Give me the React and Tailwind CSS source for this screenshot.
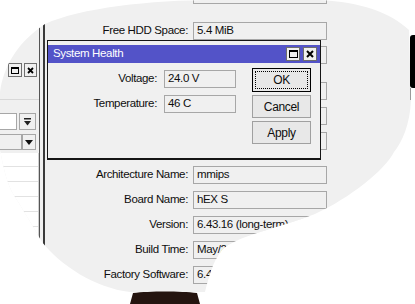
import React from "react";

const field =
  "h-[18px] border border-[#a7a7a7] bg-[#f0f0f0] flex items-center pl-[3px] whitespace-nowrap overflow-hidden";

function MainRow({ label, value, cls }) {
  return (
    <div className={"flex items-center " + cls}>
      <div className="w-[143px] text-right whitespace-nowrap">{label}</div>
      <div className={"ml-[5px] w-[134px] " + field}>{value}</div>
    </div>
  );
}

function DlgRow({ label, value, cls }) {
  return (
    <div className={"flex items-center " + cls}>
      <div className="w-[109px] text-right whitespace-nowrap">{label}</div>
      <div className={"ml-[7px] w-[72px] " + field}>{value}</div>
    </div>
  );
}

function LeftWindow() {
  return (
    <div className="w-[40px] h-full flex flex-col border-r border-[#555]">
      <div className="h-[63px]" />
      <div className="flex justify-end gap-[2px] pr-[2px] h-[14px]">
        <div className="w-[14px] h-[14px] border border-[#707070] bg-[#f0f0f0] flex items-center justify-center">
          <div className="w-[8px] h-[7px] border border-black border-t-2" />
        </div>
        <div className="w-[13px] h-[14px] border border-[#707070] bg-[#f0f0f0] flex items-center justify-center">
          <svg width="7" height="7" viewBox="0 0 7 7">
            <path d="M1 1L6 6M6 1L1 6" stroke="#000" strokeWidth="1.8" />
          </svg>
        </div>
      </div>
      <div className="h-[23px] border-b border-[#d8d8d8]" />
      <div className="h-[13px]" />
      <div className="flex items-center h-[17px] pr-[3px]">
        <div className="w-[17px] h-[17px] bg-white border border-[#a7a7a7] border-l-0" />
        <div className="ml-[2px] w-[17px] h-[17px] border border-[#a7a7a7] bg-[#f0f0f0] flex items-center justify-center">
          <svg width="9" height="8" viewBox="0 0 9 8">
            <rect x="1" y="0" width="7" height="1.5" fill="#222" />
            <path d="M1 3H8L4.5 7.5Z" fill="#222" />
          </svg>
        </div>
      </div>
      <div className="mt-[4px] flex items-center h-[16px] pr-[3px]">
        <div className="w-[22px] h-[16px] bg-[#f0f0f0] border border-[#a7a7a7] border-l-0" />
        <div className="w-[14px] h-[16px] border border-[#a7a7a7] bg-[#f0f0f0] flex items-center justify-center">
          <svg width="8" height="5" viewBox="0 0 8 5">
            <path d="M0 0H8L4 5Z" fill="#111" />
          </svg>
        </div>
      </div>
      <div className="mt-[3px] flex-1 bg-white border-r border-[#d0d0d0] flex flex-col">
        <div className="h-[14px] border-b border-[#e2e2e2]" />
        <div className="h-[15px] border-b border-[#e2e2e2]" />
        <div className="h-[15px] border-b border-[#e2e2e2]" />
        <div className="h-[15px] border-b border-[#e2e2e2]" />
        <div className="h-[15px] border-b border-[#e2e2e2]" />
      </div>
    </div>
  );
}

function Dialog() {
  return (
    <div className="absolute left-[47px] top-[40px] w-[274px] h-[120px] border border-[#151515] border-b-2 bg-[#f0f0f0] flex flex-col">
      <div className="h-[4px]" />
      <div className="h-[18px] bg-[#5353c8] flex items-center pl-[5px] pr-[3px]">
        <div className="flex-1 text-white text-[11.5px]">System Health</div>
        <div className="flex gap-[3px]">
          <div className="w-[14px] h-[14px] border border-[#6d6d6d] bg-[#f0f0f0] flex items-center justify-center">
            <div className="w-[9px] h-[8px] border border-black border-t-2" />
          </div>
          <div className="w-[14px] h-[14px] border border-[#6d6d6d] bg-[#f0f0f0] flex items-center justify-center">
            <svg width="8" height="8" viewBox="0 0 8 8">
              <path d="M1 1L7 7M7 1L1 7" stroke="#000" strokeWidth="2" />
            </svg>
          </div>
        </div>
      </div>
      <div className="flex">
        <div className="flex flex-col pt-[7px]">
          <DlgRow label="Voltage:" value="24.0 V" cls="" />
          <DlgRow label="Temperature:" value="46 C" cls="mt-[7px]" />
        </div>
        <div className="ml-[16px] flex flex-col pt-[5px] w-[59px]">
          <div className="h-[24px] border border-black bg-[#e8e8e8] p-[2px]">
            <div className="h-full border border-dotted border-black flex items-center justify-center text-[12px]">
              OK
            </div>
          </div>
          <div className="mt-[3px] h-[23px] border border-[#a0a0a0] bg-[#e8e8e8] flex items-center justify-center text-[12px]">
            Cancel
          </div>
          <div className="mt-[3px] h-[23px] border border-[#a0a0a0] bg-[#e8e8e8] flex items-center justify-center text-[12px]">
            Apply
          </div>
        </div>
      </div>
    </div>
  );
}

export default function App() {
  return (
    <div className="relative w-[415px] h-[304px] bg-white overflow-hidden font-['Liberation_Sans',Arial,sans-serif] text-[11.5px] tracking-[-0.35px] text-[#0e0e0e] leading-none">
      <div className="relative flex w-full h-full bg-[#f0f0f0] [clip-path:path('M0_92C4_65_18_42_45_24C80_8_150_0_215_0L320_0C360_2_390_12_409_30L411_100C410_125_402_142_394_152C385_170_350_198_315_214C280_228_235_236_222_250C212_262_208_280_205_292L130_292C95_288_60_265_42_242C34_228_22_208_12_192C6_180_3_165_0_150Z')]">
        <LeftWindow />
        <div className="w-[3px]" />
        <div className="flex-1 h-full border-l-2 border-[#3a3a3a] flex flex-col">
          <div className="flex">
            <div className="w-[143px]" />
            <div className="ml-[5px] w-[134px] h-[4px] border border-t-0 border-[#a7a7a7]" />
          </div>
          <MainRow label="Free HDD Space:" value="5.4 MiB" cls="mt-[18px]" />
          <MainRow label="" value="" cls="mt-[6px]" />
          <MainRow label="" value="" cls="mt-[18px]" />
          <MainRow label="" value="" cls="mt-[7px]" />
          <MainRow label="" value="" cls="mt-[7px]" />
          <MainRow label="Architecture Name:" value="mmips" cls="mt-[16px]" />
          <MainRow label="Board Name:" value="hEX S" cls="mt-[7px]" />
          <MainRow label="Version:" value="6.43.16 (long-term)" cls="mt-[7px]" />
          <MainRow label="Build Time:" value="May/21/2019 11:37:21" cls="mt-[7px]" />
          <MainRow label="Factory Software:" value="6.42.2" cls="mt-[7px]" />
        </div>
        <Dialog />
      </div>
      <div className="absolute left-[410px] top-[35px] w-[5px] h-[53px] bg-black rounded-l-[3px]" />
      <div className="absolute left-[410px] top-[88px] w-px h-[12px] bg-[#9a9a9a]" />
      <svg className="absolute left-0 top-0" width="415" height="304" viewBox="0 0 415 304">
        <path d="M133 293C150 291 180 291 197 293L200 304L130 304Z" fill="#24140f" />
      </svg>
    </div>
  );
}
